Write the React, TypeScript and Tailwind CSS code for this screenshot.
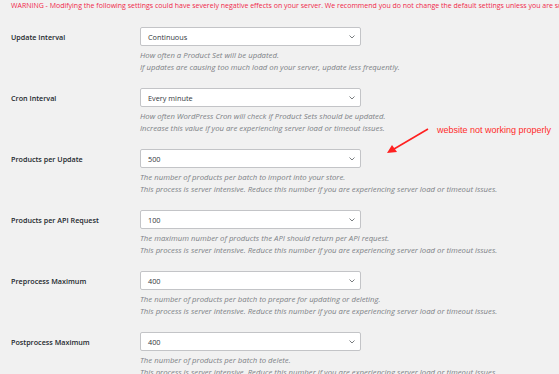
import React from 'react';

interface Setting {
  label: string;
  value: string;
  help: string[];
}

const settings: Setting[] = [
  {
    label: 'Update Interval',
    value: 'Continuous',
    help: [
      'How often a Product Set will be updated.',
      'If updates are causing too much load on your server, update less frequently.',
    ],
  },
  {
    label: 'Cron Interval',
    value: 'Every minute',
    help: [
      'How often WordPress Cron will check if Product Sets should be updated.',
      'Increase this value if you are experiencing server load or timeout issues.',
    ],
  },
  {
    label: 'Products per Update',
    value: '500',
    help: [
      'The number of products per batch to import into your store.',
      'This process is server intensive. Reduce this number if you are experiencing server load or timeout issues.',
    ],
  },
  {
    label: 'Products per API Request',
    value: '100',
    help: [
      'The maximum number of products the API should return per API request.',
      'This process is server intensive. Reduce this number if you are experiencing server load or timeout issues.',
    ],
  },
  {
    label: 'Preprocess Maximum',
    value: '400',
    help: [
      'The number of products per batch to prepare for updating or deleting.',
      'This process is server intensive. Reduce this number if you are experiencing server load or timeout issues.',
    ],
  },
  {
    label: 'Postprocess Maximum',
    value: '400',
    help: [
      'The number of products per batch to delete.',
      'This process is server intensive. Reduce this number if you are experiencing server load or timeout issues.',
    ],
  },
];

const SettingRow: React.FC<{ setting: Setting }> = ({ setting }) => (
  <div className="flex mb-[15px]">
    <div className="w-[129px] shrink-0 h-[19px] flex items-center font-semibold text-[7.2px] text-[#23282d]">
      {setting.label}
    </div>
    <div>
      <div className="w-[221px] h-[19px] bg-white border border-[#c3c4c7] rounded-[2px] flex items-center justify-between pl-[7px] pr-[5px] text-[7.3px] text-[#32373c]">
        <span>{setting.value}</span>
        <svg width="6" height="4" viewBox="0 0 6 4" fill="none">
          <path d="M0.5 0.5L3 3L5.5 0.5" stroke="#6b6f73" strokeWidth="0.9" />
        </svg>
      </div>
      <div className="mt-[3px] italic text-[7.75px] text-[#7d8186] leading-[12px] whitespace-nowrap">
        {setting.help.map((line) => (
          <p key={line}>{line}</p>
        ))}
      </div>
    </div>
  </div>
);

export default function App() {
  return (
    <div
      className="relative w-[559px] h-[374px] overflow-hidden bg-[#f1f1f1] pl-[11px] leading-[12px]"
      style={{ fontFamily: '"Open Sans", "Noto Sans", sans-serif' }}
    >
      <p className="text-[7px] text-[#f0284a] whitespace-nowrap mb-[15px]">
        WARNING - Modifying the following settings could have severely negative effects on your server. We recommend you do not change the default settings unless you are sure of what you are doing.
      </p>

      {settings.map((s) => (
        <SettingRow key={s.label} setting={s} />
      ))}

      <span
        className="absolute left-[437px] top-[124px] text-[9px] leading-[12px] text-[#ff2a2a] whitespace-nowrap"
        style={{ fontFamily: '"Liberation Sans", Arial, sans-serif' }}
      >
        website not working properly
      </span>
      <svg className="absolute left-0 top-0" width="559" height="374" viewBox="0 0 559 374">
        <line x1="428" y1="129" x2="394" y2="149" stroke="#ff2020" strokeWidth="1.6" />
        <polygon points="387,153 392,145 397,152" fill="#ff2020" />
      </svg>
    </div>
  );
}
